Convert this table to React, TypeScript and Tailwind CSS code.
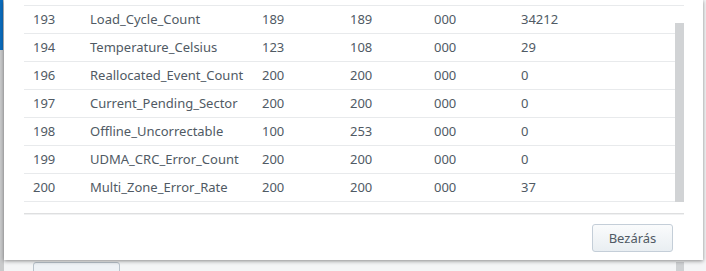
import React from 'react';

const rows = [
  ['193', 'Load_Cycle_Count', '189', '189', '000', '34212'],
  ['194', 'Temperature_Celsius', '123', '108', '000', '29'],
  ['196', 'Reallocated_Event_Count', '200', '200', '000', '0'],
  ['197', 'Current_Pending_Sector', '200', '200', '000', '0'],
  ['198', 'Offline_Uncorrectable', '100', '253', '000', '0'],
  ['199', 'UDMA_CRC_Error_Count', '200', '200', '000', '0'],
  ['200', 'Multi_Zone_Error_Rate', '200', '200', '000', '37'],
];

const App: React.FC = () => {
  return (
    <div
      className="relative w-[706px] h-[271px] overflow-hidden bg-[#f4f5f6] text-[13px] text-[#505a64]"
      style={{ fontFamily: '"Noto Sans", "Open Sans", sans-serif' }}
    >
      {/* window behind the dialog */}
      <div className="absolute left-0 top-0 w-[4px] h-full bg-[#c9cacb]">
        <div className="h-[50px] w-[3px] bg-[#0a6cbd]" />
      </div>
      <div className="absolute left-[33px] top-[262px] w-[87px] h-[24px] rounded-[3px] border border-[#b9c3cc] bg-[#eef2f6]" />
      <div className="absolute left-[676px] top-[262px] w-[8px] h-[10px] bg-[#cfd1d3]" />

      {/* dialog */}
      <div className="absolute left-[4px] top-0 w-[699px] h-[260px] bg-white shadow-[0_1px_4px_rgba(0,0,0,0.45)] flex flex-col">
        <div className="relative pl-[20px] pr-[19px]">
          <div className="h-[6px] border-b border-[#e8eaec]" />
          {rows.map((r) => (
            <div
              key={r[0]}
              className="grid grid-cols-[57px_172px_88px_84px_87px_1fr] h-[28px] items-center border-b border-[#e8eaec]"
            >
              {r.map((c, i) => (
                <div key={i} className="pl-[9px] whitespace-nowrap leading-[27px]">
                  {c}
                </div>
              ))}
            </div>
          ))}
          <div className="absolute left-[671px] top-[23px] w-[9px] h-[179px] bg-[#d1d3d5]" />
        </div>
        <div className="h-[11px]" />
        <div className="mx-[20px] mr-[19px] h-[2px] border-t border-[#dedfe0] bg-[#f0f1f2]" />
        <div className="flex justify-end pt-[9px] pr-[30px]">
          <button className="w-[81px] h-[28px] rounded-[3px] border border-[#c4ced8] bg-gradient-to-b from-[#fafbfc] to-[#e9eef2] text-[13px] text-[#505a64] leading-none">
            Bezárás
          </button>
        </div>
      </div>
    </div>
  );
};

export default App;
